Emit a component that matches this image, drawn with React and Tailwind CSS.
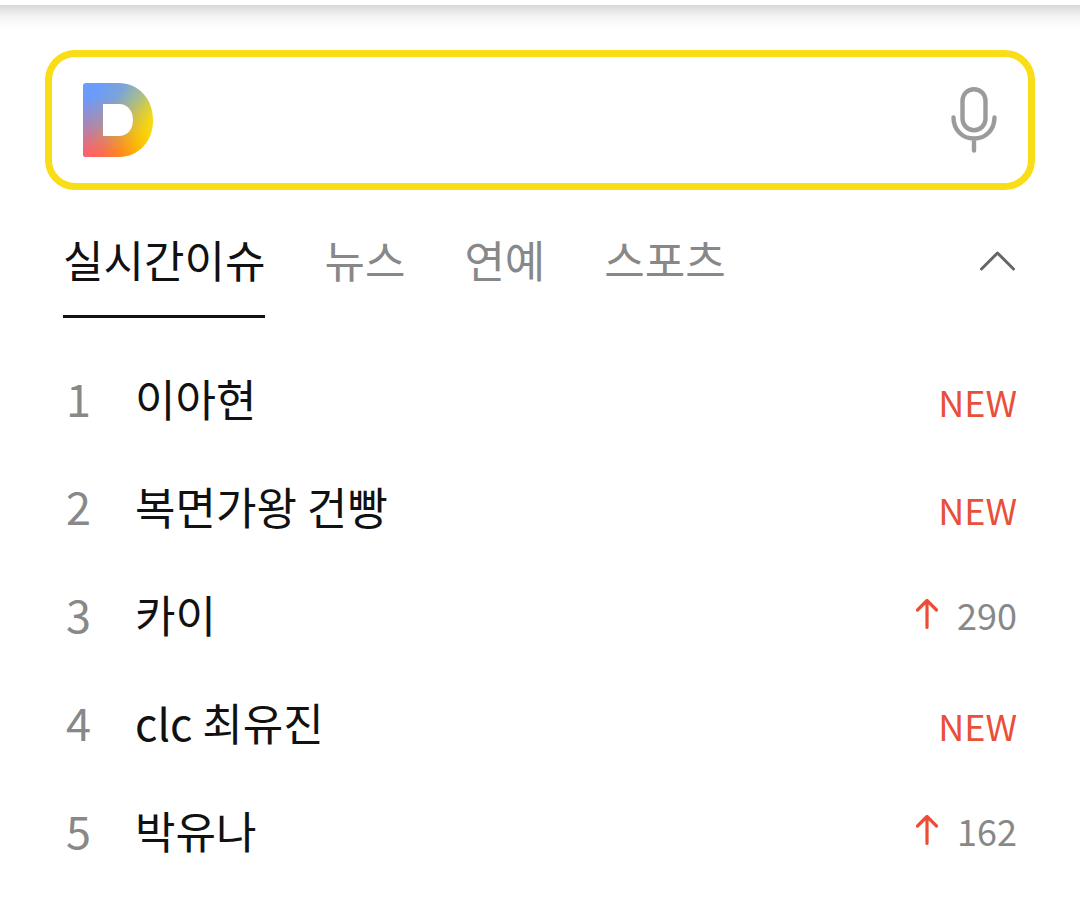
import React, { useState } from 'react';

const tabs = ['실시간이슈', '뉴스', '연예', '스포츠'];

const issues = [
  { rank: 1, keyword: '이아현', isNew: true },
  { rank: 2, keyword: '복면가왕 건빵', isNew: true },
  { rank: 3, keyword: '카이', change: 290 },
  { rank: 4, keyword: 'clc 최유진', isNew: true },
  { rank: 5, keyword: '박유나', change: 162 },
];

const D_SHAPE =
  'M3 0H35C56 0 70 16 70 37S56 74 35 74H3Q0 74 0 71V3Q0 0 3 0ZM20 21V53H36C45 53 50 46 50 37S45 21 36 21Z';

const Logo = () => (
  <svg className="w-[70px] h-[74px] shrink-0" viewBox="0 0 70 74" aria-hidden="true">
    <defs>
      <linearGradient id="base" gradientUnits="userSpaceOnUse" x1="12" y1="8" x2="66" y2="40">
        <stop offset="0" stopColor="#6b9bfb" />
        <stop offset="0.35" stopColor="#7ba4d8" />
        <stop offset="0.65" stopColor="#a6be90" />
        <stop offset="1" stopColor="#f2dc18" />
      </linearGradient>
      <linearGradient id="bottom" gradientUnits="userSpaceOnUse" x1="0" y1="0" x2="70" y2="0">
        <stop offset="0" stopColor="#fb5f70" />
        <stop offset="0.3" stopColor="#fd6c4c" />
        <stop offset="0.55" stopColor="#ff8a1c" />
        <stop offset="0.8" stopColor="#ffb600" />
        <stop offset="1" stopColor="#fadb0c" />
      </linearGradient>
      <linearGradient id="fade" gradientUnits="userSpaceOnUse" x1="0" y1="14" x2="0" y2="70">
        <stop offset="0" stopColor="#fff" stopOpacity="0" />
        <stop offset="0.5" stopColor="#fff" stopOpacity="0.4" />
        <stop offset="1" stopColor="#fff" />
      </linearGradient>
      <mask id="fadeMask" maskUnits="userSpaceOnUse" x="0" y="0" width="70" height="74">
        <rect width="70" height="74" fill="url(#fade)" />
      </mask>
    </defs>
    <path d={D_SHAPE} fill="url(#base)" fillRule="evenodd" />
    <path d={D_SHAPE} fill="url(#bottom)" fillRule="evenodd" mask="url(#fadeMask)" />
  </svg>
);

const MicIcon = () => (
  <svg className="w-[46px] h-[66px]" viewBox="0 0 46 66" fill="none" stroke="#9b9b9b" strokeWidth="4.4" strokeLinecap="round">
    <rect x="11.5" y="2.2" width="23" height="41" rx="11.5" />
    <path d="M2.5 30.5C2.5 43 11.5 51.5 23 51.5S43.5 43 43.5 30.5M23 52V63.5" />
  </svg>
);

const ArrowUp = () => (
  <svg className="w-6 h-8" viewBox="0 0 24 32" fill="none" stroke="#ee4c36" strokeWidth="3.2" strokeLinecap="round" strokeLinejoin="round" aria-hidden="true">
    <path d="M12 29.5V2.5M2.5 12L12 2.5L21.5 12" />
  </svg>
);

export default function App() {
  const [activeTab, setActiveTab] = useState(tabs[0]);
  const [query, setQuery] = useState('');
  const [open, setOpen] = useState(true);

  return (
    <div className="bg-white pt-[5px] font-['Noto_Sans_CJK_KR','Noto_Sans',sans-serif] text-[#111]">
      {/* Header shadow */}
      <div className="h-6 bg-linear-to-b from-[#d8d8d8] via-[#f5f5f5] via-50% to-white" />

      {/* Search box */}
      <form
        className="mx-[45px] mt-[21px] flex h-[140px] items-center rounded-[30px] border-[7px] border-[#f8dd17] pl-[31px] pr-[31px]"
        onSubmit={(e) => e.preventDefault()}
      >
        <Logo />
        <input
          type="search"
          aria-label="검색어"
          value={query}
          onChange={(e) => setQuery(e.target.value)}
          className="mx-6 min-w-0 flex-1 text-[44px] outline-none"
        />
        <button type="button" aria-label="음성 검색" className="cursor-pointer">
          <MicIcon />
        </button>
      </form>

      {/* Tabs */}
      <div className="mt-9 flex items-start justify-between pl-[63px] pr-16">
        <div className="flex gap-[59px]">
          {tabs.map((tab) => (
            <button
              key={tab}
              type="button"
              aria-pressed={activeTab === tab}
              onClick={() => setActiveTab(tab)}
              className={`h-[92px] cursor-pointer whitespace-nowrap border-b-3 pb-6 text-[44px] leading-[64px] ${
                activeTab === tab ? 'border-[#111] text-[#111]' : 'border-transparent text-[#888]'
              }`}
            >
              {tab}
            </button>
          ))}
        </div>
        <button type="button" aria-label="접기" aria-expanded={open} onClick={() => setOpen(!open)} className="mt-[25px] cursor-pointer">
          <svg className="h-5 w-9" viewBox="0 0 36 20" fill="none" stroke="#666" strokeWidth="3" strokeLinecap="round" strokeLinejoin="round">
            <path d="M1.5 18L17.5 2L33.5 18" />
          </svg>
        </button>
      </div>

      {/* Issue ranking */}
      {open && (
        <ol className="mt-[26px]">
          {issues.map((issue) => (
            <li key={issue.rank}>
              <a href="#" className="flex h-[108px] items-center pl-[66px] pr-[63px]">
                <span className="w-[69px] text-[45px] text-[#888]">{issue.rank}</span>
                <span className="flex-1 text-[44px]">{issue.keyword}</span>
                {issue.isNew ? (
                  <span className="pt-1.5 text-[36px] text-[#e8503a]">NEW</span>
                ) : (
                  <span className="flex items-center gap-[18px] text-[36px] text-[#888]">
                    <ArrowUp />
                    {issue.change}
                  </span>
                )}
              </a>
            </li>
          ))}
        </ol>
      )}
    </div>
  );
}
